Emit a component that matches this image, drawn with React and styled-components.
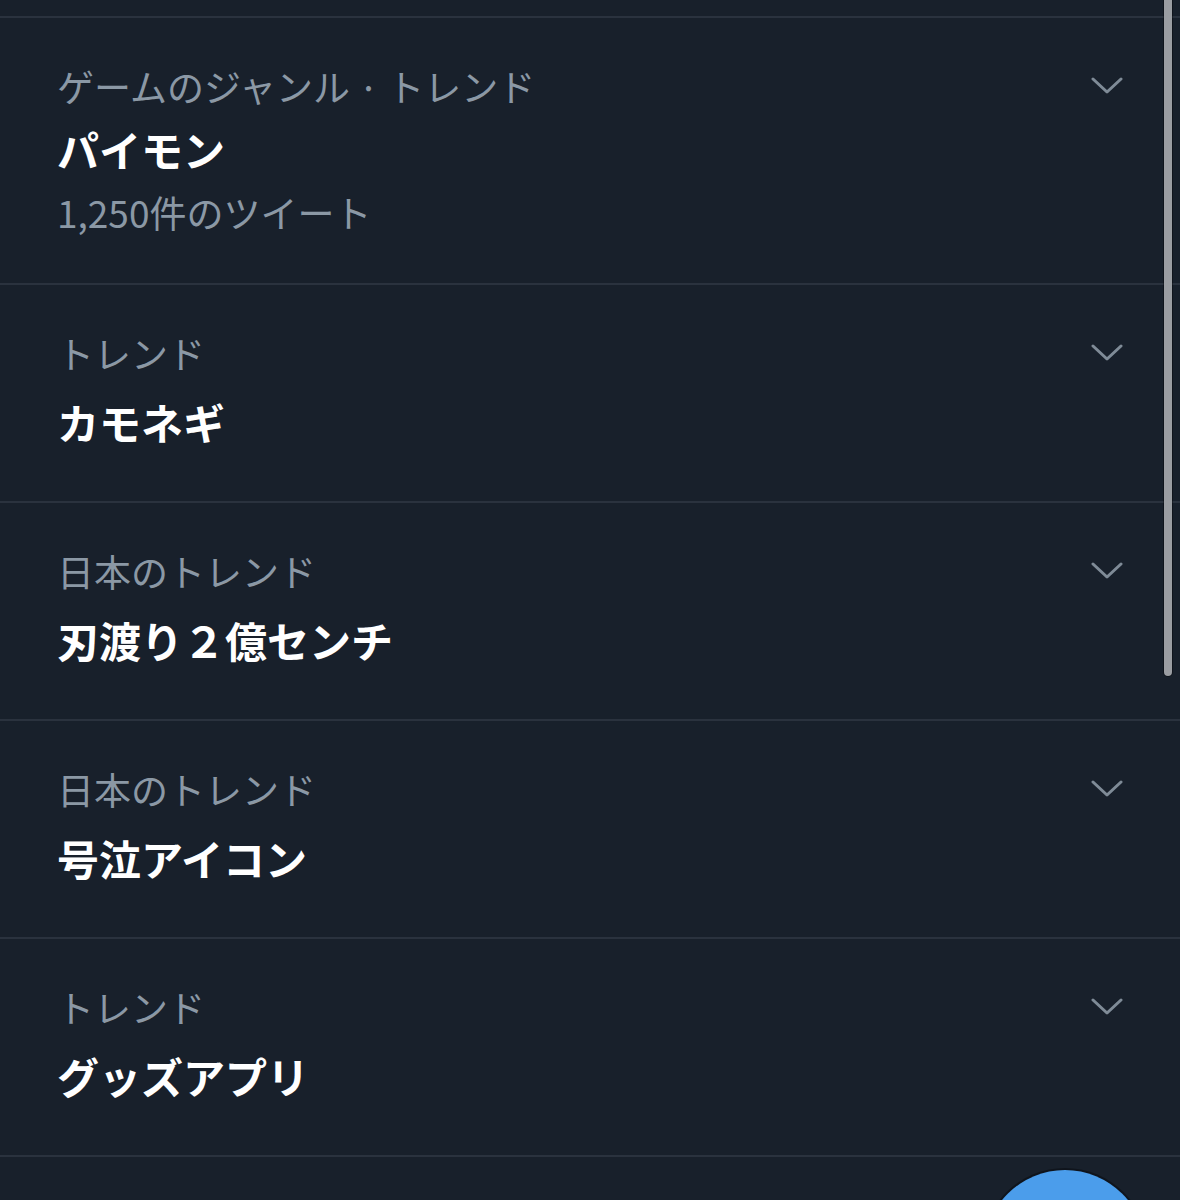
import React from "react";
import styled, { createGlobalStyle } from "styled-components";

const trends = [
  { category: "ゲームのジャンル · トレンド", title: "パイモン", count: "1,250件のツイート" },
  { category: "トレンド", title: "カモネギ" },
  { category: "日本のトレンド", title: "刃渡り２億センチ" },
  { category: "日本のトレンド", title: "号泣アイコン" },
  { category: "トレンド", title: "グッズアプリ" },
];

function Chevron() {
  return (
    <svg width="32" height="18" viewBox="0 0 32 18" fill="none">
      <path
        d="M2 2 L16 15 L30 2"
        stroke="#7f8b97"
        strokeWidth="3"
        strokeLinecap="round"
        strokeLinejoin="round"
      />
    </svg>
  );
}

function TrendRow(props) {
  const hasCount = !!props.trend.count;
  return (
    <Row $tall={hasCount}>
      <TextArea $tall={hasCount}>
        <Category>{props.trend.category}</Category>
        <Title>{props.trend.title}</Title>
        {hasCount ? <Count>{props.trend.count}</Count> : null}
      </TextArea>
      <More>
        <Chevron />
      </More>
    </Row>
  );
}

export default function App() {
  return (
    <Screen>
      <GlobalStyle />
      <PrevRow />
      {trends.map((t, i) => (
        <TrendRow key={i} trend={t} />
      ))}
      <Scrollbar />
      <Fab />
    </Screen>
  );
}

const GlobalStyle = createGlobalStyle`
  html, body {
    margin: 0;
    padding: 0;
    background: #18202b;
  }
  body {
    font-family: "Noto Sans CJK JP", "Noto Sans", sans-serif;
  }
`;

const Screen = styled.div`
  position: relative;
  width: 1180px;
  height: 1200px;
  overflow: hidden;
  background-color: #18202b;
`;

const PrevRow = styled.div`
  height: 18px;
  box-sizing: border-box;
  border-bottom: 2px solid #2a323e;
`;

const Row = styled.div`
  display: flex;
  justify-content: space-between;
  align-items: flex-start;
  height: ${(p) => (p.$tall ? "267px" : "218px")};
  padding: 46px 56px 0 57px;
  box-sizing: border-box;
  border-bottom: 2px solid #2a323e;
`;

const TextArea = styled.div`
  display: flex;
  flex-direction: column;
  gap: ${(p) => (p.$tall ? "16px" : "22px")};
`;

const Category = styled.div`
  font-size: 37px;
  line-height: 44px;
  color: #8b98a5;
  white-space: nowrap;
`;

const Title = styled.div`
  font-size: 42px;
  line-height: 50px;
  font-weight: 700;
  color: #ffffff;
  white-space: nowrap;
`;

const Count = styled.div`
  font-size: 37px;
  line-height: 44px;
  color: #8b98a5;
  white-space: nowrap;
`;

const More = styled.div`
  display: flex;
  align-items: center;
  justify-content: center;
  width: 34px;
  height: 44px;
`;

const Scrollbar = styled.div`
  position: absolute;
  top: -8px;
  right: 8px;
  width: 8px;
  height: 684px;
  border-radius: 4px;
  background-color: #9a9da2;
  box-shadow: 0 0 0 1px rgba(0, 0, 0, 0.35);
`;

const Fab = styled.div`
  position: absolute;
  left: 984px;
  top: 1170px;
  width: 162px;
  height: 162px;
  border-radius: 50%;
  background-color: #4b9deb;
  box-shadow: 0 0 0 2px rgba(0, 0, 0, 0.35);
`;
